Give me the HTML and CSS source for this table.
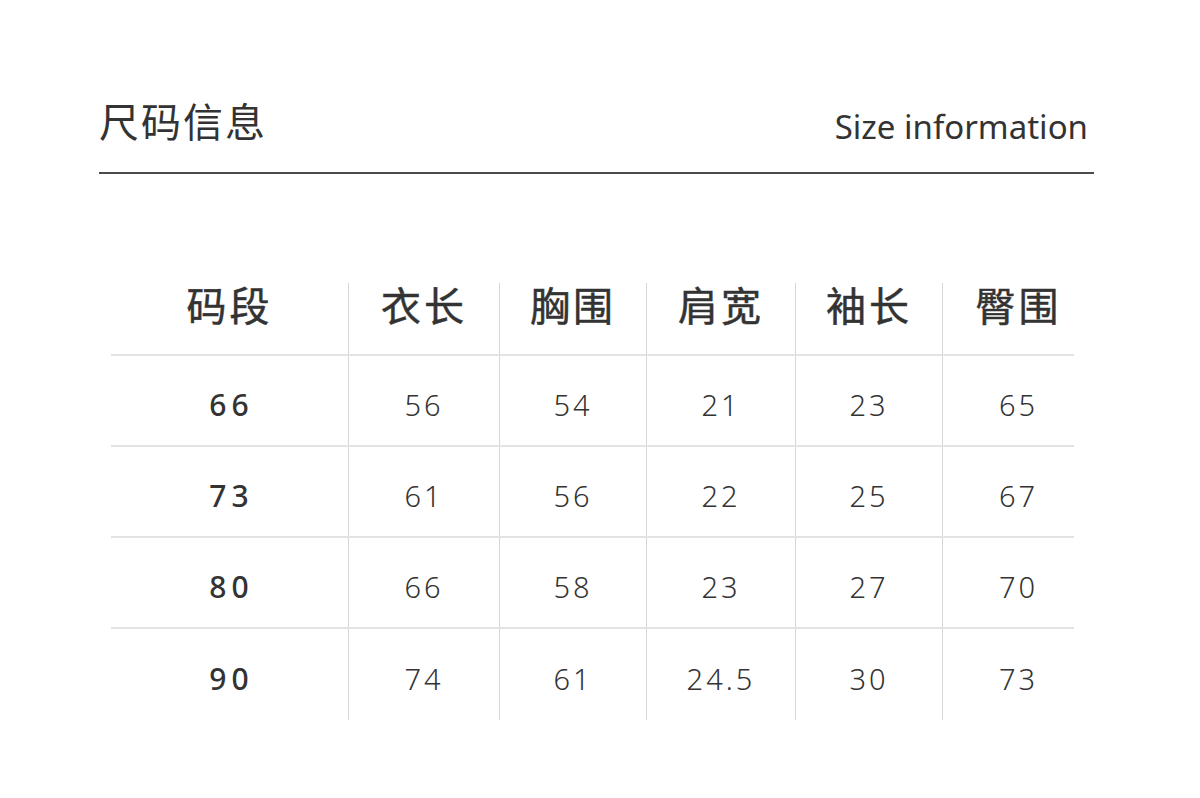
FILE: index.html
```html
<!DOCTYPE html>
<html lang="zh">
<head>
<meta charset="utf-8">
<link rel="stylesheet" href="styles.css">
</head>
<body>
<div class="page">
  <header class="head">
    <h1 class="title">尺码信息</h1>
    <div class="subtitle">Size information</div>
  </header>
  <div class="table">
    <div class="row row-head">
      <div class="cell">码段</div>
      <div class="cell">衣长</div>
      <div class="cell">胸围</div>
      <div class="cell">肩宽</div>
      <div class="cell">袖长</div>
      <div class="cell last">臀围</div>
    </div>
    <div class="row">
      <div class="cell size">66</div>
      <div class="cell">56</div>
      <div class="cell">54</div>
      <div class="cell">21</div>
      <div class="cell">23</div>
      <div class="cell last">65</div>
    </div>
    <div class="row">
      <div class="cell size">73</div>
      <div class="cell">61</div>
      <div class="cell">56</div>
      <div class="cell">22</div>
      <div class="cell">25</div>
      <div class="cell last">67</div>
    </div>
    <div class="row">
      <div class="cell size">80</div>
      <div class="cell">66</div>
      <div class="cell">58</div>
      <div class="cell">23</div>
      <div class="cell">27</div>
      <div class="cell last">70</div>
    </div>
    <div class="row">
      <div class="cell size">90</div>
      <div class="cell">74</div>
      <div class="cell">61</div>
      <div class="cell">24.5</div>
      <div class="cell">30</div>
      <div class="cell last">73</div>
    </div>
  </div>
</div>
</body>
</html>
```

FILE: styles.css
```css
* { box-sizing: border-box; }
html, body { margin: 0; padding: 0; background: #fff; }
body {
  font-family: "Noto Sans", "Noto Sans CJK SC", sans-serif;
  color: #333;
}
.page {
  width: 1200px;
  height: 798px;
  padding: 96px 106px 0 99px;
}
.head {
  display: flex;
  justify-content: space-between;
  align-items: flex-start;
  border-bottom: 2px solid #4a4a4a;
  padding-bottom: 25px;
}
.title {
  margin: 0;
  font-family: "Noto Sans CJK SC", sans-serif;
  font-weight: 400;
  font-size: 40px;
  line-height: 48px;
  letter-spacing: 2px;
  color: #333;
}
.subtitle {
  font-family: "Noto Sans", sans-serif;
  font-size: 33px;
  line-height: 40px;
  color: #333;
  margin-top: 11px;
  margin-right: 6px;
}
.table {
  margin: 109px 0 0 12px;
  width: 963px;
}
.row {
  display: grid;
  grid-template-columns: 237px 151px 147px 149px 147px 132px;
  height: 91px;
  border-bottom: 2px solid #e3e3e3;
}
.row:last-child { border-bottom: none; }
.row-head { height: 73px; }
.cell {
  display: flex;
  align-items: center;
  justify-content: center;
  font-size: 29px;
  font-weight: 300;
  letter-spacing: 3px;
  color: #333;
  padding-top: 7px;
}
.cell + .cell { border-left: 1px solid #d6d6d6; }
.cell.last { padding-left: 20px; }
.row-head .cell {
  font-family: "Noto Sans CJK SC", sans-serif;
  font-size: 40px;
  font-weight: 400;
  letter-spacing: 3px;
  align-items: flex-start;
  padding-top: 0;
  line-height: 42px;
  -webkit-text-stroke: 0.5px #333;
}
.cell.size {
  font-size: 30px;
  font-weight: 500;
  letter-spacing: 5px;
  padding-left: 4px;
}
```
